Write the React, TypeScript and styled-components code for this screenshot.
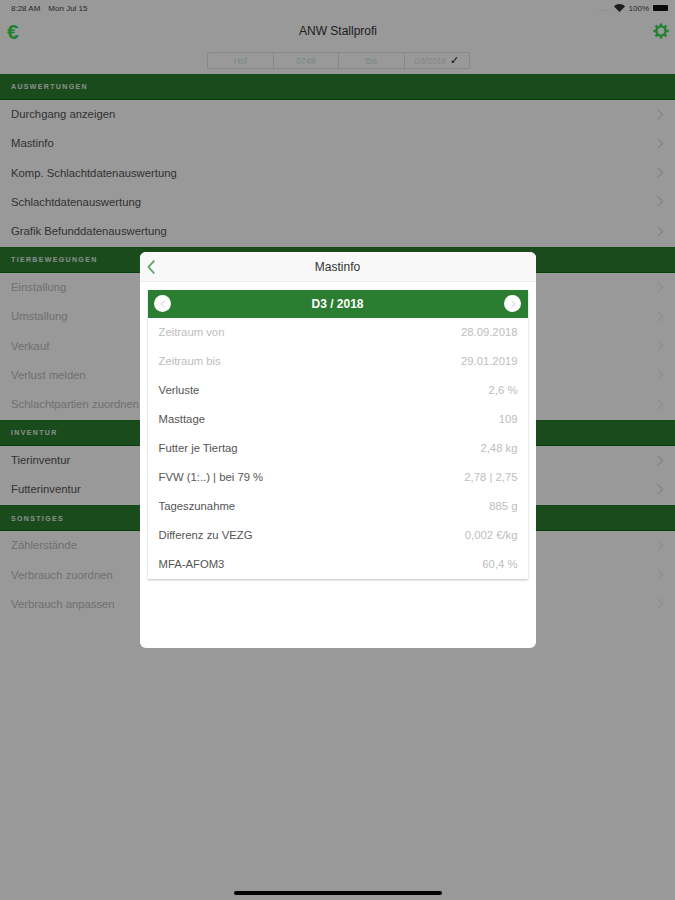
import React from 'react'
import styled, { createGlobalStyle } from 'styled-components'

const sections = [
  {
    title: 'AUSWERTUNGEN',
    rows: [
      { label: 'Durchgang anzeigen' },
      { label: 'Mastinfo' },
      { label: 'Komp. Schlachtdatenauswertung' },
      { label: 'Schlachtdatenauswertung' },
      { label: 'Grafik Befunddatenauswertung' },
    ],
  },
  {
    title: 'TIERBEWEGUNGEN',
    rows: [
      { label: 'Einstallung', muted: true },
      { label: 'Umstallung', muted: true },
      { label: 'Verkauf', muted: true },
      { label: 'Verlust melden', muted: true },
      { label: 'Schlachtpartien zuordnen', muted: true },
    ],
  },
  {
    title: 'INVENTUR',
    rows: [{ label: 'Tierinventur' }, { label: 'Futterinventur' }],
  },
  {
    title: 'SONSTIGES',
    rows: [
      { label: 'Zählerstände', muted: true },
      { label: 'Verbrauch zuordnen', muted: true },
      { label: 'Verbrauch anpassen', muted: true },
    ],
  },
]

const infoRows = [
  { label: 'Zeitraum von', value: '28.09.2018', muted: true },
  { label: 'Zeitraum bis', value: '29.01.2019', muted: true },
  { label: 'Verluste', value: '2,6 %' },
  { label: 'Masttage', value: '109' },
  { label: 'Futter je Tiertag', value: '2,48 kg' },
  { label: 'FVW (1:..) | bei 79 %', value: '2,78 | 2,75' },
  { label: 'Tageszunahme', value: '885 g' },
  { label: 'Differenz zu VEZG', value: '0,002 €/kg' },
  { label: 'MFA-AFOM3', value: '60,4 %' },
]

const segments = ['Hof', '0749', 'Bis', 'D3/2018']

const Chevron = ({ color = '#dcdcde', size = 11 }: { color?: string; size?: number }) => (
  <svg width={size * 0.62} height={size} viewBox="0 0 8 13" fill="none">
    <path d="M1.2 1.2 6.6 6.5 1.2 11.8" stroke={color} strokeWidth="1.4" strokeLinecap="round" strokeLinejoin="round" />
  </svg>
)

const Gear = () => (
  <GearIcon width="16" height="16" viewBox="0 0 16 16" fill="none">
    <circle cx="8" cy="8" r="4.6" stroke="#33d94d" strokeWidth="2.4" />
    <g stroke="#33d94d" strokeWidth="2.6">
      <path d="M8 .4v2.6M8 13v2.6M.4 8H3M13 8h2.6M2.6 2.6l1.8 1.8M11.6 11.6l1.8 1.8M13.4 2.6l-1.8 1.8M4.4 11.6l-1.8 1.8" />
    </g>
  </GearIcon>
)

const App = () => {
  return (
    <Screen>
      <GlobalStyle />
      <StatusBar>
        <StatusLeft>
          <span>8:28 AM</span>
          <span>Mon Jul 15</span>
        </StatusLeft>
        <StatusRight>
          <Signal>....</Signal>
          <svg width="11" height="8" viewBox="0 0 11 8">
            <path d="M5.5 8 0 2.4C3.2-.7 7.8-.7 11 2.4Z" fill="#333" />
          </svg>
          <span>100%</span>
          <Battery />
        </StatusRight>
      </StatusBar>
      <NavBar>
        <Euro>€</Euro>
        <NavTitle>ANW Stallprofi</NavTitle>
        <Gear />
      </NavBar>
      <SegmentWrap>
        <Segments>
          {segments.map((segment, index) => (
            <Segment key={segment} $last={index === segments.length - 1}>
              {segment}
              {index === segments.length - 1 && <Check>✓</Check>}
            </Segment>
          ))}
        </Segments>
      </SegmentWrap>
      {sections.map((section) => (
        <Section key={section.title}>
          <SectionHeader>{section.title}</SectionHeader>
          {section.rows.map((row) => (
            <MenuRow key={row.label} $muted={row.muted}>
              {row.label}
              <Chevron color={row.muted ? '#ececee' : '#dcdcde'} />
            </MenuRow>
          ))}
        </Section>
      ))}

      <Overlay>
        <Modal>
          <ModalHeader>
            <BackButton>
              <svg width="8" height="14" viewBox="0 0 8 14" fill="none">
                <path d="M6.8 1.2 1.4 7l5.4 5.8" stroke="#55a45b" strokeWidth="1.8" strokeLinecap="round" strokeLinejoin="round" />
              </svg>
            </BackButton>
            Mastinfo
          </ModalHeader>
          <Card>
            <CardHeader>
              <RoundButton $flip>
                <Chevron color="#c8c8c8" size={8} />
              </RoundButton>
              D3 / 2018
              <RoundButton>
                <Chevron color="#c8c8c8" size={8} />
              </RoundButton>
            </CardHeader>
            {infoRows.map((row) => (
              <InfoRow key={row.label} $muted={row.muted}>
                <span>{row.label}</span>
                <InfoValue>{row.value}</InfoValue>
              </InfoRow>
            ))}
          </Card>
        </Modal>
      </Overlay>
      <HomeIndicator />
    </Screen>
  )
}

export default App

const GlobalStyle = createGlobalStyle`
  html, body {
    margin: 0;
    padding: 0;
    background: #fff;
  }
  * {
    box-sizing: border-box;
  }
`

const Screen = styled.div`
  position: relative;
  width: 675px;
  height: 900px;
  overflow: hidden;
  background: #fff;
  font-family: 'Liberation Sans', Arial, sans-serif;
  color: #333;
`

const StatusBar = styled.div`
  display: flex;
  justify-content: space-between;
  align-items: center;
  height: 16px;
  padding: 0 7px 0 11px;
  font-size: 8px;
  color: #444;
`

const StatusLeft = styled.div`
  display: flex;
  gap: 8px;
`

const StatusRight = styled.div`
  display: flex;
  align-items: center;
  gap: 4px;
`

const Signal = styled.span`
  color: #bbb;
  letter-spacing: 1px;
`

const Battery = styled.span`
  width: 15px;
  height: 6px;
  border-radius: 1px;
  background: #111;
`

const NavBar = styled.div`
  display: grid;
  grid-template-columns: 1fr auto 1fr;
  align-items: center;
  height: 30px;
  padding: 0 6px 0 7px;
`

const Euro = styled.span`
  font-size: 21px;
  font-weight: 700;
  line-height: 1;
  color: #33d94d;
`

const GearIcon = styled.svg`
  justify-self: end;
`

const NavTitle = styled.span`
  font-size: 12px;
  color: #333;
`

const SegmentWrap = styled.div`
  display: flex;
  justify-content: center;
  height: 28px;
  padding: 6px 0 0 2px;
`

const Segments = styled.div`
  display: flex;
  width: 263px;
  height: 17px;
  border: 1px solid #dde5de;
  border-radius: 2px;
`

const Segment = styled.div<{ $last?: boolean }>`
  flex: 1;
  display: flex;
  justify-content: center;
  align-items: center;
  gap: 4px;
  font-size: 8.5px;
  color: ${(props) => (props.$last ? '#e2e2e2' : '#c8e6cc')};
  border-right: ${(props) => (props.$last ? 'none' : '1px solid #dde5de')};
`

const Check = styled.span`
  font-size: 11px;
  color: #111;
`

const Section = styled.section`
  margin-bottom: 1.25px;
`

const SectionHeader = styled.div`
  display: flex;
  align-items: center;
  height: 25.5px;
  padding-left: 11px;
  background: #2b7d31;
  border-top: 1px solid #1f7a26;
  border-bottom: 1px solid #0a6a10;
  color: #e6efe6;
  font-size: 7px;
  font-weight: 700;
  letter-spacing: 1.35px;
`

const MenuRow = styled.div<{ $muted?: boolean }>`
  display: flex;
  justify-content: space-between;
  align-items: center;
  height: 29.25px;
  padding: 0 11px;
  font-size: 11.3px;
  color: ${(props) => (props.$muted ? '#bbb' : '#555')};
`

const Overlay = styled.div`
  position: absolute;
  inset: 0;
  display: flex;
  justify-content: center;
  align-items: center;
  background: rgba(0, 0, 0, 0.4);
`

const Modal = styled.div`
  width: 396px;
  height: 396px;
  border-radius: 6px;
  overflow: hidden;
  background: #fff;
`

const ModalHeader = styled.div`
  position: relative;
  display: flex;
  justify-content: center;
  align-items: center;
  height: 30px;
  background: #f8f8f8;
  border-bottom: 1px solid #eee;
  font-size: 12px;
  color: #333;
`

const BackButton = styled.span`
  position: absolute;
  left: 7px;
  top: 8px;
  display: flex;
`

const Card = styled.div`
  margin: 8px 8px 0;
  box-shadow: 0 1px 2px rgba(0, 0, 0, 0.25);
`

const CardHeader = styled.div`
  display: flex;
  justify-content: space-between;
  align-items: center;
  height: 27.5px;
  padding: 0 6px;
  background: #2b7d31;
  color: #fff;
  font-size: 12px;
  font-weight: 700;
`

const RoundButton = styled.span<{ $flip?: boolean }>`
  display: flex;
  justify-content: center;
  align-items: center;
  width: 17px;
  height: 17px;
  border-radius: 50%;
  background: #fff;
  transform: ${(props) => (props.$flip ? 'scaleX(-1)' : 'none')};
`

const InfoRow = styled.div<{ $muted?: boolean }>`
  display: flex;
  justify-content: space-between;
  align-items: center;
  height: 29px;
  padding: 0 10px 0 11px;
  font-size: 11.3px;
  color: ${(props) => (props.$muted ? '#bdbdbd' : '#555')};
`

const InfoValue = styled.span`
  color: #bdbdbd;
`

const HomeIndicator = styled.div`
  position: absolute;
  left: 234px;
  bottom: 5px;
  width: 208px;
  height: 4px;
  border-radius: 2px;
  background: #000;
`
